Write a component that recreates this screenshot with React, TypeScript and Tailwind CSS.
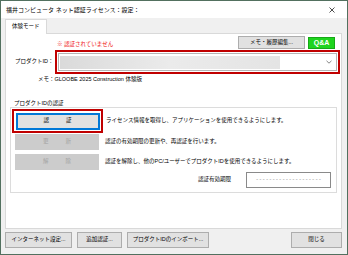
export default function App() {
  return (
    <div className="w-[348px] h-[255px] bg-[#f0f0f0] border border-[#52705f] flex flex-col text-[5.5px] leading-none text-black font-['Liberation_Sans','Noto_Sans_CJK_JP',sans-serif]">
      {/* title bar */}
      <div className="h-[17px] bg-white flex items-center justify-between pl-[5px] pr-[12px] text-[6px]">
        <span>福井コンピュータ ネット認証ライセンス：設定：</span>
        <svg width="6" height="6" viewBox="0 0 6 6">
          <path d="M0.5 0.5L5.5 5.5M5.5 0.5L0.5 5.5" stroke="#222" strokeWidth="0.8" />
        </svg>
      </div>

      <div className="flex-1 flex flex-col pl-[4px] pr-[5px] pt-[1px]">
        {/* tab */}
        <div className="flex">
          <div className="h-[15px] px-[6px] bg-white border border-[#d9d9d9] border-b-0 flex items-center -mb-px relative z-10">
            体験モード
          </div>
        </div>

        {/* panel */}
        <div className="h-[196px] bg-white border border-[#d9d9d9] flex flex-col">
          <div className="mt-[2px] h-[13px] flex items-start">
            <span className="ml-[51px] mt-[6px] text-[#f01010]">※ 認証されていません</span>
            <div className="ml-auto mr-[6px] flex items-center gap-[3px]">
              <button className="w-[67px] h-[13px] bg-[#e1e1e1] border border-[#adadad] flex items-center justify-center">
                メモ・履歴編集...
              </button>
              <button className="w-[27px] h-[12px] bg-[#1ed41e] border border-[#16a816] text-white font-bold text-[7px] flex items-center justify-center">
                Q&amp;A
              </button>
            </div>
          </div>

          {/* product id */}
          <div className="mt-[1px] h-[24px] flex items-center">
            <span className="w-[49px] pl-[9px] shrink-0">プロダクトID：</span>
            <div className="flex-1 mr-[1px] h-full border-2 border-[#c00000] p-px">
              <div className="h-full border border-[#b4b4b4] bg-white flex items-center pl-px pr-[4px]">
                <div className="h-[13px] w-[220px] bg-gradient-to-r from-[#dadada] via-[#ebebeb] to-[#e4e4e4] blur-[0.5px]" />
                <svg className="ml-auto" width="6" height="4" viewBox="0 0 6 4">
                  <path d="M0.5 0.8L3 3.2L5.5 0.8" fill="none" stroke="#666" strokeWidth="0.8" />
                </svg>
              </div>
            </div>
          </div>

          <div className="mt-[3px] pl-[32px]">メモ：GLOOBE 2025 Construction 体験版</div>

          {/* group */}
          <div className="mt-[18px] pl-[8px]">プロダクトIDの認証</div>
          <div className="mt-[1px] mx-[4px] h-[86px] border border-[#dcdcdc] flex flex-col">
            <div className="mt-px h-[24px] flex items-center">
              <div className="ml-px w-[91px] h-full border-2 border-[#c00000] flex items-center justify-center">
                <button className="w-[84px] h-[17px] bg-[#e1e1e1] border border-[#0078d7] ring-1 ring-inset ring-[#0078d7] flex items-center justify-center gap-[17px]">
                  <span>認</span>
                  <span>証</span>
                </button>
              </div>
              <span className="ml-[3px]">ライセンス情報を取得し、アプリケーションを使用できるようにします。</span>
            </div>
            <div className="mt-px h-[16px] flex items-center">
              <button className="ml-[4px] w-[84px] h-full bg-[#cccccc] text-[#a3a3a3] flex items-center justify-center gap-[17px]">
                <span>更</span>
                <span>新</span>
              </button>
              <span className="ml-[6px]">認証の有効期限の更新や、再認証を行います。</span>
            </div>
            <div className="mt-[4px] h-[16px] flex items-center">
              <button className="ml-[4px] w-[84px] h-full bg-[#cccccc] text-[#a3a3a3] flex items-center justify-center gap-[17px]">
                <span>解</span>
                <span>除</span>
              </button>
              <span className="ml-[6px]">認証を解除し、他のPC/ユーザーでプロダクトIDを使用できるようにします。</span>
            </div>
            <div className="mt-[2px] h-[16px] flex items-center justify-end mr-[5px]">
              <span>認証有効期限</span>
              <div className="ml-[15px] w-[85px] h-full border border-[#8a8a8a] flex items-center justify-center text-[#8a8a8a] font-['Liberation_Mono',monospace] text-[5.5px]">
                --------------------
              </div>
            </div>
          </div>
        </div>

        {/* bottom buttons */}
        <div className="mt-[3px] h-[16px] flex">
          <button className="w-[67px] h-full bg-[#e1e1e1] border border-[#adadad] flex items-center justify-center">
            インターネット設定...
          </button>
          <button className="ml-[5px] w-[45px] h-full bg-[#e1e1e1] border border-[#adadad] flex items-center justify-center">
            追加認証...
          </button>
          <button className="ml-[5px] w-[82px] h-full bg-[#e1e1e1] border border-[#adadad] flex items-center justify-center">
            プロダクトIDのインポート...
          </button>
          <button className="ml-auto w-[51px] h-full bg-[#e1e1e1] border border-[#adadad] flex items-center justify-center">
            閉じる
          </button>
        </div>
      </div>
    </div>
  );
}
